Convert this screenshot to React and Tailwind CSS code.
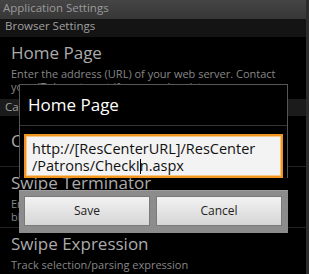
import React from 'react';

function Category({ label, className = '' }) {
  return (
    <div className={`text-[11.5px] text-[#a0a0a0] pl-[5px] ${className}`}>{label}</div>
  );
}

function Pref({ title, lines, className = '' }) {
  return (
    <div className={`pl-[11px] ${className}`}>
      <div className="text-[17px] leading-[20px] text-[#ababab]">{title}</div>
      {lines && (
        <div className="mt-[4px] text-[11px] leading-[13px] text-[#878787]">
          {lines.map((l, i) => (
            <div key={i} className="whitespace-nowrap">{l}</div>
          ))}
        </div>
      )}
    </div>
  );
}

export default function App() {
  return (
    <div className="relative w-[309px] h-[274px] overflow-hidden bg-black flex font-['Open_Sans',sans-serif]">
      <div className="flex-1 flex flex-col min-w-0">
        <div className="h-[19px] shrink-0 bg-gradient-to-b from-[#454545] to-[#373737] text-[11.5px] leading-[16px] text-[#9a9a9a] pl-[3px]">
          Application Settings
        </div>
        <Category label="Browser Settings" className="h-[18px] leading-[14px] bg-[#141414] shrink-0" />
        <Pref
          title="Home Page"
          className="pt-[6px] pb-[6px]"
          lines={[
            'Enter the address (URL) of your web server. Contact',
            'your IT department if you need assistance.',
          ]}
        />
        <Category label="Card Reader Settings" className="h-[17px] leading-[15px] bg-[#1b1b1b] text-[#7c7c7c] shrink-0" />
        <div className="h-[50px] flex items-center shrink-0">
          <Pref title="Card Reader Type" />
        </div>
        <div className="h-px bg-[#222] shrink-0" />
        <Pref
          title="Swipe Terminator"
          className="pt-[6px] pb-[4px]"
          lines={['Enter the character that ends a card swipe, or leave', 'blank for the default']}
        />
        <div className="h-px bg-[#222] shrink-0" />
        <Pref
          title="Swipe Expression"
          className="pt-[6px]"
          lines={['Track selection/parsing expression']}
        />
      </div>
      <div className="w-[3px] shrink-0 bg-[#2c2c2c]" />

      {/* dialog */}
      <div className="absolute left-[19px] top-[84px] w-[269px] flex flex-col">
        <div className="bg-black border-t border-x border-[#575757]">
          <div className="h-[40px] pl-[8px] text-[17px] leading-[40px] text-white">Home Page</div>
          <div className="h-px bg-[#353535]" />
          <div className="px-[4px] pt-[8px]">
            <div className="h-[44px] border-2 border-[#f0951f] bg-[#f3f3f3] shadow-[inset_0_0_0_1px_#f7c88a] pl-[6px] pt-[4px] text-[14.5px] leading-[17px] text-[#111] whitespace-nowrap">
              http://[ResCenterURL]/ResCenter
              <br />
              /Patrons/CheckI<span className="inline-block w-px h-[15px] bg-black align-[-3px] -mr-px" />n.aspx
            </div>
          </div>
        </div>
        <div className="h-[12px]" />
        <div className="h-[43px] bg-[#8c8c8c] border-t border-[#9c9c9c] px-[5px] pt-[5px] flex gap-[6px]">
          <button className="w-[126px] h-[30px] bg-gradient-to-b from-[#f2f2f2] to-[#d6d6d6] border border-[#7a7a7a] text-[12px] text-[#222]">
            Save
          </button>
          <button className="w-[126px] h-[30px] bg-gradient-to-b from-[#f2f2f2] to-[#d6d6d6] border border-[#7a7a7a] text-[12px] text-[#222]">
            Cancel
          </button>
        </div>
      </div>
    </div>
  );
}
